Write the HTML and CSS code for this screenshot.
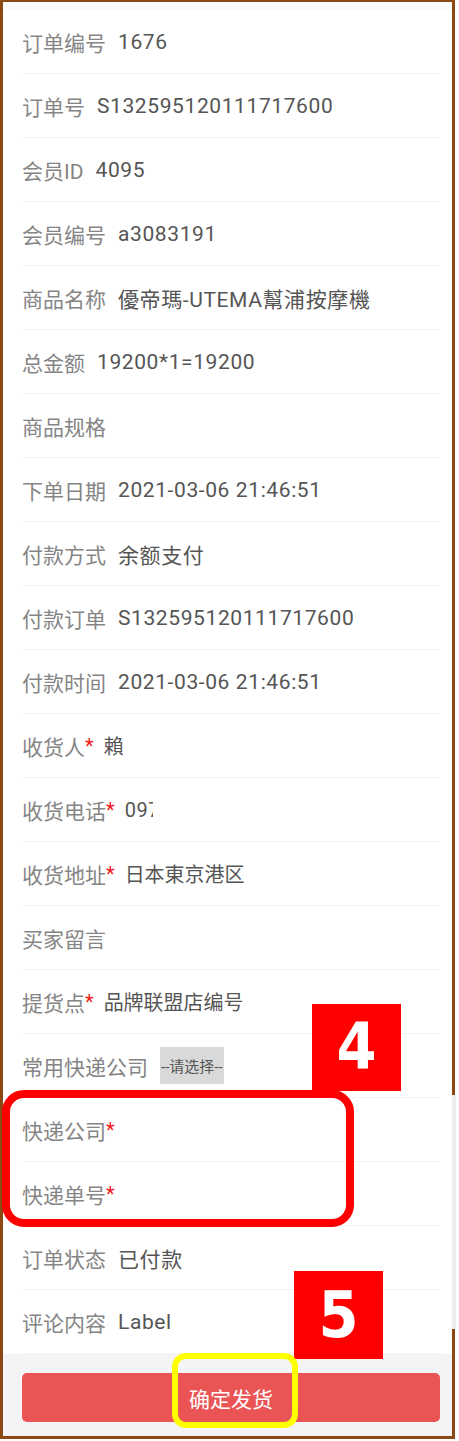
FILE: index.html
```html
<!DOCTYPE html>
<html lang="zh-CN">
<head>
    <meta charset="UTF-8">
    <meta name="viewport" content="width=device-width, initial-scale=1.0">
    <title>订单发货</title>
    <link rel="stylesheet" href="styles.css">
</head>
<body>
    <div class="order-page">
        <ul class="order-info">
            <li class="row"><span class="label">订单编号</span><span class="value">1676</span></li>
            <li class="row"><span class="label">订单号</span><span class="value">S132595120111717600</span></li>
            <li class="row"><span class="label">会员ID</span><span class="value">4095</span></li>
            <li class="row"><span class="label">会员编号</span><span class="value">a3083191</span></li>
            <li class="row"><span class="label">商品名称</span><span class="value">優帝瑪-UTEMA幫浦按摩機</span></li>
            <li class="row"><span class="label">总金额</span><span class="value">19200*1=19200</span></li>
            <li class="row"><span class="label">商品规格</span><span class="value"></span></li>
            <li class="row"><span class="label">下单日期</span><span class="value">2021-03-06 21:46:51</span></li>
            <li class="row"><span class="label">付款方式</span><span class="value">余额支付</span></li>
            <li class="row"><span class="label">付款订单</span><span class="value">S132595120111717600</span></li>
            <li class="row"><span class="label">付款时间</span><span class="value">2021-03-06 21:46:51</span></li>
            <li class="row"><span class="label">收货人</span><span class="req">*</span><span class="value cut cut-name">賴</span></li>
            <li class="row"><span class="label">收货电话</span><span class="req">*</span><span class="value cut cut-phone">097</span></li>
            <li class="row"><span class="label">收货地址</span><span class="req">*</span><span class="value small">日本東京港区</span></li>
            <li class="row"><span class="label">买家留言</span><span class="value"></span></li>
            <li class="row"><span class="label">提货点</span><span class="req">*</span><span class="value small">品牌联盟店编号</span></li>
            <li class="row"><span class="label">常用快递公司</span><span class="picker">--请选择--</span></li>
            <li class="row"><span class="label">快递公司</span><span class="req">*</span></li>
            <li class="row"><span class="label">快递单号</span><span class="req">*</span></li>
            <li class="row"><span class="label">订单状态</span><span class="value">已付款</span></li>
            <li class="row"><span class="label">评论内容</span><span class="value">Label</span></li>
        </ul>
        <div class="footer">
            <button type="button" class="submit-btn">确定发货</button>
        </div>

        <div class="scroll-thumb"></div>
        <div class="mark-box"></div>
        <div class="step step-4">4</div>
        <div class="step step-5">5</div>
        <div class="btn-ring"></div>
    </div>
</body>
</html>
```

FILE: styles.css
```css
body {
    margin: 0;
    background-color: #fff;
    font-family: Roboto, "Noto Sans CJK SC", sans-serif;
}
.order-page {
    position: relative;
    width: 449px;
    border: 3px solid #8b4a14;
    border-top-width: 2px;
    background-color: #fafafa;
    padding-top: 8px;
}
.order-info {
    list-style: none;
    margin: 0;
    padding: 0;
    background-color: #fff;
}
.order-info .row {
    display: flex;
    align-items: center;
    height: 63px;
    margin-left: 19px;
    margin-right: 12px;
    border-bottom: 1px solid #f2f2f2;
    font-size: 21px;
    white-space: nowrap;
}
.order-info .label {
    color: #858585;
    margin-right: 12px;
}
.order-info .req {
    color: #f01818;
    margin-left: -12px;
    margin-right: 10px;
    font-size: 20px;
}
.order-info .value {
    color: #555;
    letter-spacing: 0.6px;
}
.order-info .value.small {
    font-size: 20px;
    letter-spacing: 0;
}
.order-info .cut {
    display: inline-block;
    overflow: hidden;
    font-size: 20px;
}
.cut-name {
    width: 19px;
}
.cut-phone {
    width: 28px;
}
.picker {
    padding: 8px 1px;
    background-color: #d9d9d9;
    color: #555;
    font-size: 15px;
}
.footer {
    background-color: #f4f4f6;
    padding: 19px 12px 14px 19px;
}
.submit-btn {
    display: block;
    width: 100%;
    height: 49px;
    border: none;
    border-radius: 5px;
    background-color: #ea5455;
    color: #fff;
    font-family: "Noto Sans CJK SC", sans-serif;
    font-size: 21px;
    padding: 0;
}
.scroll-thumb {
    position: absolute;
    left: 449px;
    top: 1093px;
    width: 4px;
    height: 234px;
    background-color: #eee;
}
.mark-box {
    position: absolute;
    left: -1px;
    top: 1088px;
    width: 336px;
    height: 121px;
    border: 8px solid #ff0000;
    border-radius: 22px;
}
.step {
    position: absolute;
    width: 89px;
    height: 87px;
    background-color: #ff0000;
    color: #fff;
    font-family: "Liberation Sans Narrow", "DejaVu Sans Condensed", sans-serif;
    font-weight: bold;
    font-size: 64px;
    line-height: 87px;
    text-align: center;
}
.step-4 {
    left: 309px;
    top: 1002px;
}
.step-5 {
    left: 291px;
    top: 1269px;
    height: 88px;
    line-height: 88px;
}
.btn-ring {
    position: absolute;
    left: 169px;
    top: 1351px;
    width: 114px;
    height: 63px;
    border: 6px solid #ffff00;
    border-radius: 14px;
}
```
